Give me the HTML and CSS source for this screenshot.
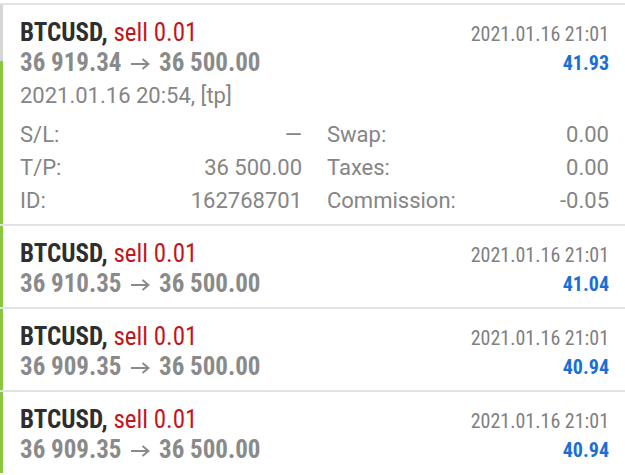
FILE: index.html
```html
<!DOCTYPE html>
<html>
<head>
<meta charset="utf-8">
<link rel="stylesheet" href="styles.css">
</head>
<body>
<div class="list">
  <div class="deal first">
    <div class="head">
      <div class="left">
        <div class="title"><b>BTCUSD,</b> <span class="sell">sell 0.01</span></div>
        <div class="price">36 919.34 <svg class="arrow" viewBox="0 0 20 12" width="20" height="12"><path d="M1 6H18M12.5 1L18.5 6L12.5 11"/></svg> 36 500.00</div>
      </div>
      <div class="right">
        <div class="time">2021.01.16 21:01</div>
        <div class="profit">41.93</div>
      </div>
    </div>
    <div class="details">
      <div class="open">2021.01.16 20:54, [tp]</div>
      <div class="grid">
        <div class="field"><span>S/L:</span><span>—</span></div>
        <div class="field"><span>Swap:</span><span>0.00</span></div>
        <div class="field"><span>T/P:</span><span>36 500.00</span></div>
        <div class="field"><span>Taxes:</span><span>0.00</span></div>
        <div class="field"><span>ID:</span><span>162768701</span></div>
        <div class="field"><span>Commission:</span><span>-0.05</span></div>
      </div>
    </div>
  </div>
  <div class="deal">
    <div class="head">
      <div class="left">
        <div class="title"><b>BTCUSD,</b> <span class="sell">sell 0.01</span></div>
        <div class="price">36 910.35 <svg class="arrow" viewBox="0 0 20 12" width="20" height="12"><path d="M1 6H18M12.5 1L18.5 6L12.5 11"/></svg> 36 500.00</div>
      </div>
      <div class="right">
        <div class="time">2021.01.16 21:01</div>
        <div class="profit">41.04</div>
      </div>
    </div>
  </div>
  <div class="deal">
    <div class="head">
      <div class="left">
        <div class="title"><b>BTCUSD,</b> <span class="sell">sell 0.01</span></div>
        <div class="price">36 909.35 <svg class="arrow" viewBox="0 0 20 12" width="20" height="12"><path d="M1 6H18M12.5 1L18.5 6L12.5 11"/></svg> 36 500.00</div>
      </div>
      <div class="right">
        <div class="time">2021.01.16 21:01</div>
        <div class="profit">40.94</div>
      </div>
    </div>
  </div>
  <div class="deal">
    <div class="head">
      <div class="left">
        <div class="title"><b>BTCUSD,</b> <span class="sell">sell 0.01</span></div>
        <div class="price">36 909.35 <svg class="arrow" viewBox="0 0 20 12" width="20" height="12"><path d="M1 6H18M12.5 1L18.5 6L12.5 11"/></svg> 36 500.00</div>
      </div>
      <div class="right">
        <div class="time">2021.01.16 21:01</div>
        <div class="profit">40.94</div>
      </div>
    </div>
  </div>
</div>
</body>
</html>
```
FILE: styles.css
```css
html, body {
  margin: 0;
  padding: 0;
  background: #ffffff;
}
body {
  padding-top: 3px;
  font-family: Roboto, "Liberation Sans", sans-serif;
  overflow: hidden;
}
.list {
  display: flex;
  flex-direction: column;
}
.deal {
  border-top: 2px solid #e2e2e2;
  padding: 13px 16px 8px 20px;
  background: linear-gradient(#8cc63f, #8cc63f) left top / 3px 100% no-repeat;
}
.deal.first {
  background:
    linear-gradient(#d6d6d6, #d6d6d6) left top / 3px 56px no-repeat,
    linear-gradient(#8cc63f, #8cc63f) left top / 3px 100% no-repeat;
  padding-bottom: 7px;
}
.head {
  display: flex;
  justify-content: space-between;
}
.title, .price, .time, .profit {
  font-family: "Roboto Condensed", Roboto, sans-serif;
  font-stretch: condensed;
}
.title {
  font-size: 25px;
  line-height: 30px;
  color: #2e2e2e;
}
.title b {
  font-weight: 700;
}
.sell {
  color: #c1161d;
}
.price {
  font-size: 25px;
  line-height: 30px;
  font-weight: 700;
  color: #8a8a8a;
}
.arrow {
  fill: none;
  stroke: #8a8a8a;
  stroke-width: 2;
  vertical-align: 1px;
  margin: 0 3px;
}
.right {
  text-align: right;
}
.time {
  font-size: 20px;
  color: #808080;
  line-height: 30px;
  padding-top: 1px;
}
.profit {
  font-size: 20px;
  font-weight: 700;
  color: #1a6fd6;
  line-height: 28px;
}
.details {
  padding-top: 1px;
  font-size: 22px;
  color: #858585;
}
.open {
  line-height: 34px;
}
.grid {
  display: grid;
  grid-template-columns: 1fr 1fr;
  column-gap: 25px;
  line-height: 33px;
  padding-top: 5px;
}
.field {
  display: flex;
  justify-content: space-between;
}
```
